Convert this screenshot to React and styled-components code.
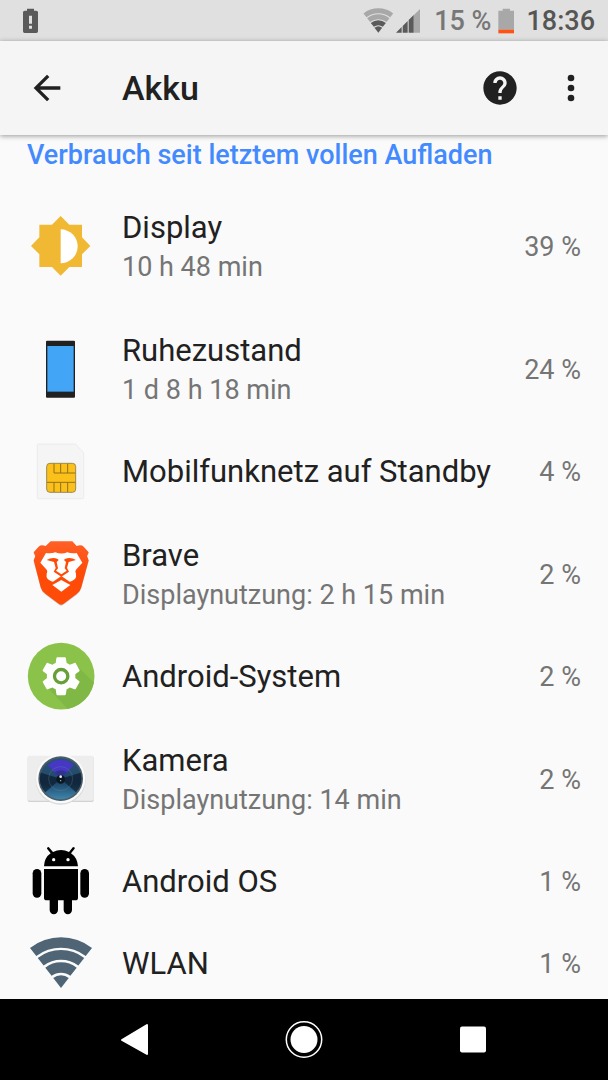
import React from 'react';
import styled, { createGlobalStyle } from 'styled-components';

const GlobalStyle = createGlobalStyle`
  * {
    box-sizing: border-box;
  }
  body {
    margin: 0;
    background: #fafafa;
    font-family: Roboto, 'Liberation Sans', sans-serif;
    color: #212121;
  }
`;

const Screen = styled.div`
  display: flex;
  flex-direction: column;
  height: 100vh;
`;

const StatusBar = styled.div`
  display: flex;
  justify-content: space-between;
  align-items: center;
  flex-shrink: 0;
  height: 41px;
  padding: 0 13px 0 22px;
  background: #e0e0e0;
`;

const StatusGroup = styled.div`
  display: flex;
  align-items: center;
`;

const StatusIcon = styled.svg`
  display: block;
  width: ${(props) => props.$width}px;
  height: 26px;
`;

const BatteryLevel = styled.span`
  margin-right: 6px;
  font-size: 27px;
  line-height: 40px;
  font-weight: 500;
  color: #777;
`;

const Clock = styled.span`
  font-size: 27px;
  line-height: 40px;
  font-weight: 500;
  color: #555;
`;

const Signals = styled.div`
  margin-right: 13px;
`;

const Battery = styled.div`
  margin-right: 11px;
`;

const Toolbar = styled.header`
  display: flex;
  align-items: center;
  flex-shrink: 0;
  height: 94px;
  padding: 0 17px 0 27px;
  background: #f5f5f5;
  box-shadow: 0 1px 5px rgba(0, 0, 0, 0.4);
  z-index: 1;
`;

const IconButton = styled.button`
  width: 40px;
  height: 40px;
  padding: 0;
  border: none;
  background: none;
  cursor: pointer;

  svg {
    display: block;
    width: 40px;
    height: 40px;
    fill: #212121;
  }
`;

const Title = styled.h1`
  flex: 1;
  margin: 0 0 0 55px;
  font-size: 34px;
  line-height: 40px;
  font-weight: 500;
`;

const Actions = styled.div`
  display: flex;
  gap: 31px;
`;

const Content = styled.main`
  flex: 1;
  min-height: 0;
  overflow-y: auto;
  scrollbar-width: none;
`;

const SectionTitle = styled.h2`
  margin: 0;
  padding: 0 27px 10px;
  font-size: 27px;
  line-height: 40px;
  font-weight: 500;
  color: #448aff;
`;

const UsageList = styled.ul`
  margin: 0;
  padding: 0;
  list-style: none;
`;

const UsageRow = styled.li`
  display: flex;
  align-items: center;
  gap: 27px;
  height: ${(props) => (props.$tall ? 123 : 82)}px;
  padding: 0 27px;
`;

const AppIcon = styled.svg`
  flex-shrink: 0;
  width: 68px;
  height: 68px;
  overflow: visible;
`;

const RowText = styled.div`
  flex: 1;
  min-width: 0;
`;

const Name = styled.div`
  font-size: 31px;
  line-height: 40px;
`;

const Detail = styled.div`
  font-size: 27px;
  line-height: 38px;
  color: #757575;
`;

const Percent = styled.div`
  font-size: 27px;
  line-height: 38px;
  color: #757575;
`;

const NavBar = styled.nav`
  display: flex;
  justify-content: center;
  flex-shrink: 0;
  height: 81px;
  background: #000;
`;

const NavButton = styled.button`
  display: flex;
  align-items: center;
  justify-content: center;
  width: 169px;
  padding: 0;
  border: none;
  background: none;
  cursor: pointer;
`;

// one band of a wifi fan, between two radii
const band = (cx, cy, inner, outer) => {
  const dx = 0.612;
  const dy = 0.791;
  const p = (r, side) => `${cx + side * r * dx} ${cy - r * dy}`;
  return `M${p(inner, -1)}L${p(outer, -1)}A${outer} ${outer} 0 0 1 ${p(outer, 1)}L${p(inner, 1)}A${inner} ${inner} 0 0 0 ${p(inner, -1)}Z`;
};

const DisplayIcon = () => (
  <AppIcon viewBox='81 68 204 204' aria-hidden='true'>
    <path
      fill='#f1b933'
      d='M182 77L208 103H246V141L271 167L246 192V230H208L182 256L156 230H118V192L93 167L118 141V103H156Z'
    />
    <path fill='#fff' d='M182 117A51 51 0 0 1 182 219Z' />
  </AppIcon>
);

const PhoneIcon = () => (
  <AppIcon viewBox='81 437 204 204' aria-hidden='true'>
    <rect x='138' y='451' width='87' height='171' rx='3' fill='#212121' />
    <rect x='142' y='467' width='79' height='137' fill='#42a5f5' />
  </AppIcon>
);

const SimIcon = () => (
  <AppIcon viewBox='21 24 204 204' aria-hidden='true'>
    <path
      d='M55 42H166L191 68V203Q191 206 188 206H55Q52 206 52 203V45Q52 42 55 42Z'
      fill='#f5f5f5'
      stroke='#e6e6e6'
      strokeWidth='2'
    />
    <rect x='80' y='100' width='87' height='87' rx='10' fill='#fbc11a' stroke='#9b8a55' strokeWidth='3' />
    <path
      d='M102 101V129H166M122 101V129M143 101V129M81 157H166M102 157V186M122 157V186M143 157V186'
      fill='none'
      stroke='#927019'
      strokeWidth='3'
    />
  </AppIcon>
);

const BraveIcon = () => (
  <AppIcon viewBox='21 32 204 204' aria-hidden='true'>
    <defs>
      <linearGradient id='brave' x1='0' y1='0' x2='0' y2='1'>
        <stop offset='0' stopColor='#ff6026' />
        <stop offset='0.5' stopColor='#ff4b08' />
      </linearGradient>
    </defs>
    <path
      d='M92 35H157L170 49Q184 44 191 51L206 68L201 79L206 92L184 173Q181 185 170 193L130 223Q123 228 117 223L77 193Q65 185 62 173L41 92L46 79L41 68L56 51Q63 44 77 49Z'
      fill='#b0a6a2'
      opacity='0.6'
    />
    <path
      d='M92 33H157L170 47Q184 42 191 49L206 66L201 77L206 90L184 171Q181 183 170 191L130 221Q123 225 117 221L77 191Q65 183 62 171L41 90L46 77L41 66L56 49Q63 42 77 47Z'
      fill='url(#brave)'
    />
    <path
      d='M78 68Q94 70 106 66Q124 73 142 66Q154 70 170 68L187 97L168 118Q164 123 168 130Q170 140 165 146Q155 154 149 154L124 137L99 154Q93 154 83 146Q78 140 80 130Q84 123 80 118L61 97Z'
      fill='#fff'
    />
    <path
      d='M80 89Q97 79 113 86L116 89L110 95L114 114L108 121L124 132V139L101 124L107 113L102 95ZM168 89Q151 79 135 86L132 89L138 95L134 114L140 121L124 132V139L147 124L141 113L146 95Z'
      fill='#ff4b08'
    />
    <path d='M97 164L124 149L151 164L124 184Z' fill='#fff' />
  </AppIcon>
);

const SystemIcon = () => (
  <AppIcon viewBox='21 24 204 204' aria-hidden='true'>
    <defs>
      <clipPath id='disc'>
        <circle cx='123.5' cy='123.5' r='100' />
      </clipPath>
    </defs>
    <circle cx='123.5' cy='123.5' r='100' fill='#8bc34a' />
    <path d='M174 95L250 171L220 240H160L75 150Z' fill='#80b845' clipPath='url(#disc)' />
    <path
      transform='translate(55 55) scale(5.7)'
      fill='#fff'
      d='M19.43 12.98c.04-.32.07-.64.07-.98s-.03-.66-.07-.98l2.11-1.65c.19-.15.24-.42.12-.64l-2-3.46c-.12-.22-.39-.3-.61-.22l-2.49 1c-.52-.4-1.08-.73-1.69-.98l-.38-2.65C14.46 2.18 14.25 2 14 2h-4c-.25 0-.46.18-.49.42l-.38 2.65c-.61.25-1.17.59-1.69.98l-2.49-1c-.23-.09-.49 0-.61.22l-2 3.46c-.13.22-.07.49.12.64l2.11 1.65c-.04.32-.07.65-.07.98s.03.66.07.98l-2.11 1.65c-.19.15-.24.42-.12.64l2 3.46c.12.22.39.3.61.22l2.49-1c.52.4 1.08.73 1.69.98l.38 2.65c.03.24.24.42.49.42h4c.25 0 .46-.18.49-.42l.38-2.65c.61-.25 1.17-.59 1.69-.98l2.49 1c.23.09.49 0 .61-.22l2-3.46c.12-.22.07-.49-.12-.64l-2.11-1.65z'
    />
    <circle cx='123.5' cy='123.5' r='20' fill='#fff' stroke='#689f38' strokeWidth='10' />
  </AppIcon>
);

const CameraIcon = () => (
  <AppIcon viewBox='21 18 204 204' aria-hidden='true'>
    <defs>
      <linearGradient id='lens' x1='0' y1='0' x2='0' y2='1'>
        <stop offset='0' stopColor='#2c5474' />
        <stop offset='0.6' stopColor='#1d4668' />
        <stop offset='1' stopColor='#3f86ad' />
      </linearGradient>
    </defs>
    <rect x='23' y='50' width='198' height='136' rx='5' fill='#d2d2d2' />
    <rect x='23' y='47' width='198' height='135' rx='5' fill='#ededed' />
    <circle cx='122' cy='119' r='75' fill='#dadada' />
    <circle cx='122' cy='116' r='74' fill='#fafafa' />
    <circle cx='122' cy='116' r='67' fill='#4c5d69' />
    <circle cx='122' cy='116' r='62' fill='url(#lens)' />
    <path d='M122 116L62 98A62 62 0 0 0 76 157Z' fill='#09131f' opacity='0.6' />
    <path d='M122 116L182 98A62 62 0 0 1 168 157Z' fill='#09131f' opacity='0.6' />
    <path d='M122 116L83 76Q122 43 161 76Z' fill='#4637c4' />
    <path d='M122 116L104 97Q122 84 140 97Z' fill='#33318f' />
    <circle cx='122' cy='116' r='36' fill='none' stroke='#7b94a8' strokeWidth='2' opacity='0.4' />
    <circle cx='122' cy='118' r='13' fill='#0c1724' />
    <circle cx='122' cy='110' r='4' fill='#e8f2fa' />
    <circle cx='122' cy='122' r='2' fill='#a8bfce' />
  </AppIcon>
);

const AndroidIcon = () => (
  <AppIcon viewBox='21 25 204 204' aria-hidden='true'>
    <path d='M72 80Q73 54 92 41L81 27Q80 22 86 22L99 37Q123 25 147 37L159 22Q166 22 164 27L153 41Q172 54 174 80Z' />
    <circle cx='101' cy='60' r='5' fill='#fafafa' />
    <circle cx='144' cy='60' r='5' fill='#fafafa' />
    <path d='M72 88H174V174Q174 182 166 182H156V211A12 12 0 0 1 131 211V182H114V211A12 12 0 0 1 89 211V182H80Q72 182 72 174Z' />
    <rect x='38' y='88' width='26' height='86' rx='13' />
    <rect x='181' y='88' width='26' height='86' rx='13' />
  </AppIcon>
);

const WlanIcon = () => (
  <AppIcon viewBox='21 15 204 204' aria-hidden='true' fill='#4f6576'>
    <path d={band(123, 189, 121, 152)} />
    <path d={band(123, 189, 85, 114)} />
    <path d={band(123, 189, 46, 77)} />
    <path d={band(123, 189, 0, 38)} />
  </AppIcon>
);

const usage = [
  { name: 'Display', detail: '10 h 48 min', percent: 39, Icon: DisplayIcon },
  { name: 'Ruhezustand', detail: '1 d 8 h 18 min', percent: 24, Icon: PhoneIcon },
  { name: 'Mobilfunknetz auf Standby', percent: 4, Icon: SimIcon },
  { name: 'Brave', detail: 'Displaynutzung: 2 h 15 min', percent: 2, Icon: BraveIcon },
  { name: 'Android-System', percent: 2, Icon: SystemIcon },
  { name: 'Kamera', detail: 'Displaynutzung: 14 min', percent: 2, Icon: CameraIcon },
  { name: 'Android OS', percent: 1, Icon: AndroidIcon },
  { name: 'WLAN', percent: 1, Icon: WlanIcon },
];

const UsageItem = ({ name, detail, percent, Icon }) => {
  return (
    <UsageRow $tall={Boolean(detail)}>
      <Icon />
      <RowText>
        <Name>{name}</Name>
        {detail && <Detail>{detail}</Detail>}
      </RowText>
      <Percent>{percent} %</Percent>
    </UsageRow>
  );
};

const App = () => {
  return (
    <Screen>
      <GlobalStyle />
      <StatusBar>
        <StatusIcon $width={18} viewBox='66 22 54 78' aria-hidden='true'>
          <path
            fill='#5a5a5a'
            d='M81 24H102V30H109Q114 30 114 35V92Q114 97 109 97H74Q69 97 69 92V35Q69 30 74 30H81Z'
          />
          <path fill='#e0e0e0' d='M87 45H96V69H87ZM87 75H96V84H87Z' />
        </StatusIcon>
        <StatusGroup>
          <Signals>
            <StatusIcon $width={58} viewBox='70 22 174 78' aria-hidden='true'>
              <g fill='#a8a8a8'>
                <path d={band(116, 96, 58, 73)} />
                <path d={band(116, 96, 40, 55)} />
                <path d='M222 44L241 25V96H222Z' />
              </g>
              <g fill='#5a5a5a'>
                <path d={band(116, 96, 22, 37)} />
                <path d={band(116, 96, 0, 19)} />
                <path d='M169 96L186 79V96ZM189 76L204 61V96H189ZM207 58L222 43V96H207Z' />
              </g>
            </StatusIcon>
          </Signals>
          <BatteryLevel>15 %</BatteryLevel>
          <Battery>
            <StatusIcon $width={18} viewBox='471 22 54 78' aria-hidden='true'>
              <path fill='#a8a8a8' d='M488 24H510V30H522V87H475V30H488Z' />
              <path fill='#ff5315' d='M475 87H522V98H475Z' />
            </StatusIcon>
          </Battery>
          <Clock>18:36</Clock>
        </StatusGroup>
      </StatusBar>
      <Toolbar>
        <IconButton aria-label='Zurück'>
          <svg viewBox='0 0 24 24'>
            <path d='M20 11H7.83l5.59-5.59L12 4l-8 8 8 8 1.41-1.41L7.83 13H20v-2z' />
          </svg>
        </IconButton>
        <Title>Akku</Title>
        <Actions>
          <IconButton aria-label='Hilfe'>
            <svg viewBox='0 0 24 24'>
              <path d='M12 2C6.48 2 2 6.48 2 12s4.48 10 10 10 10-4.48 10-10S17.52 2 12 2zm1 17h-2v-2h2v2zm2.07-7.75l-.9.92C13.45 12.9 13 13.5 13 15h-2v-.5c0-1.1.45-2.1 1.17-2.83l1.24-1.26c.37-.36.59-.86.59-1.41 0-1.1-.9-2-2-2s-2 .9-2 2H8c0-2.21 1.79-4 4-4s4 1.79 4 4c0 .88-.36 1.68-.93 2.25z' />
            </svg>
          </IconButton>
          <IconButton aria-label='Weitere Optionen'>
            <svg viewBox='0 0 24 24'>
              <circle cx='12' cy='6' r='2' />
              <circle cx='12' cy='12' r='2' />
              <circle cx='12' cy='18' r='2' />
            </svg>
          </IconButton>
        </Actions>
      </Toolbar>
      <Content>
        <SectionTitle>Verbrauch seit letztem vollen Aufladen</SectionTitle>
        <UsageList>
          {usage.map((item) => (
            <UsageItem key={item.name} {...item} />
          ))}
        </UsageList>
      </Content>
      <NavBar>
        <NavButton aria-label='Zurück'>
          <svg width='40' height='40' viewBox='0 0 40 40'>
            <path
              d='M32 5V34L7 20Z'
              fill='#fff'
              stroke='#fff'
              strokeWidth='2'
              strokeLinejoin='round'
            />
          </svg>
        </NavButton>
        <NavButton aria-label='Startbildschirm'>
          <svg width='40' height='40' viewBox='0 0 40 40'>
            <circle cx='20' cy='19.5' r='17.7' fill='none' stroke='#fff' strokeWidth='1.5' />
            <circle cx='20' cy='19.5' r='13.5' fill='#fff' />
          </svg>
        </NavButton>
        <NavButton aria-label='Letzte Apps'>
          <svg width='40' height='40' viewBox='0 0 40 40'>
            <rect x='7' y='6.5' width='26' height='26' rx='2' fill='#fff' />
          </svg>
        </NavButton>
      </NavBar>
    </Screen>
  );
};

export default App;
